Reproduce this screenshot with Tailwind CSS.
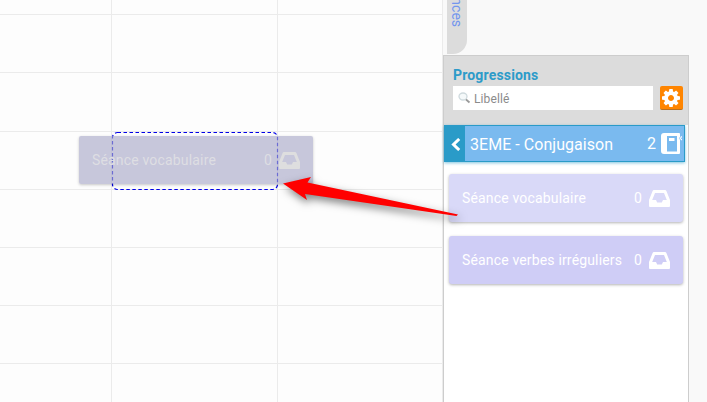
<!DOCTYPE html>
<html lang="fr">
<head>
<meta charset="utf-8">
<title>Progressions</title>
<script src="https://cdn.jsdelivr.net/npm/@tailwindcss/browser@4"></script>
</head>
<body class="relative flex h-[402px] w-[707px] overflow-hidden bg-[#f9f9f9] font-[Roboto,sans-serif]">
<svg class="hidden">
  <symbol id="inbox" viewBox="0 0 21 17"><path fill-rule="evenodd" d="M5 0H16Q17 0 17.400 1L21 10V16Q21 17 20 17H1Q0 17 0 16V10L3.600 1Q4 0 5 0ZM6 3L3.200 10H7L8.200 12.500H12.800L14 10H17.800L15 3Z"/></symbol>
</svg>

<!-- Calendar grid -->
<main class="grid w-[443px] shrink-0 grid-cols-[112px_166px_165px] grid-rows-[15px_58px_59px_58px_58px_58px_58px_40px] bg-[#fdfdfd] *:border-r *:border-b *:border-[#ebebeb]">
  <i></i><i></i><i></i><i></i><i></i><i></i><i></i><i></i><i></i><i></i><i></i><i></i>
  <i></i><i></i><i></i><i></i><i></i><i></i><i></i><i></i><i></i><i></i><i></i><i></i>
</main>

<!-- Side panel -->
<aside class="flex w-[246px] shrink-0 flex-col">
  <div class="ml-1 flex h-[54px] w-5 items-end justify-center rounded-br-[14px] bg-[#dcdcdc] pb-[27px]">
    <span class="text-[14px] leading-5 whitespace-nowrap text-[#7396ee] [writing-mode:vertical-rl]">Séances</span>
  </div>
  <section class="mt-px flex h-[348px] flex-col border-x border-t border-[#cdcdcd] bg-white">
    <header class="h-[69px] bg-[#dcdcdc] pt-[9px] pl-[9px]">
      <h2 class="mb-px h-5 text-[14px] leading-5 font-bold tracking-[0.17px] text-[#2d9bc9]">Progressions</h2>
      <div class="flex gap-[7px]">
        <div class="flex h-6 w-[200px] items-center bg-white pl-[5px]">
          <svg class="h-3 w-[13px]" viewBox="0 0 13 12" fill="none"><ellipse cx="5" cy="4.500" rx="4" ry="3.500" fill="#f5f9fa" stroke="#cfdade" stroke-width="1.300"/><path d="M8 7.500L11.500 10.500" stroke="#999" stroke-width="1.800"/></svg>
          <span class="ml-[3px] pt-px text-[12px] tracking-[0.1px] text-[#8b8b8b]">Libellé</span>
        </div>
        <div class="flex h-6 w-[23px] items-center justify-center rounded-[2px] border-b border-[#b87020] bg-[#ff8500]">
          <svg class="mr-px size-[18px] fill-white" viewBox="0 128 1536 1536"><path d="M1024 896q0-106-75-181t-181-75-181 75-75 181 75 181 181 75 181-75 75-181zm512-109v222q0 12-8 23t-20 13l-185 28q-19 54-39 91 35 50 107 138 10 12 10 25t-9 23q-27 37-99 108t-94 71q-12 0-26-9l-138-108q-44 23-91 38-16 136-29 186-7 28-36 28h-222q-14 0-24.500-8.500t-11.500-21.500l-28-184q-49-16-90-37l-141 107q-10 9-25 9-14 0-25-11-126-114-165-168-7-10-7-23 0-12 8-23 15-21 51-66.500t54-70.500q-27-50-41-99l-183-27q-13-2-21-12.500t-8-23.500v-222q0-12 8-23t19-13l186-28q14-46 39-92-40-57-107-138-10-12-10-24 0-10 9-23 26-36 98.500-107.500t94.500-71.500q13 0 26 10l138 107q44-23 91-38 16-136 29-186 7-28 36-28h222q14 0 24.500 8.500t11.500 21.500l28 184q49 16 90 37l142-107q9-9 24-9 13 0 25 10 129 119 165 170 7 8 7 22 0 12-8 23-15 21-51 66.500t-54 70.500q26 50 41 98l183 28q13 2 21 12.500t8 23.500z"/></svg>
        </div>
      </div>
    </header>
    <div class="flex h-[37px] w-[241px] shrink-0 items-center border border-l-0 border-[#2a9bc8] bg-[#7abaef] text-[16px] text-white shadow-[0_1px_3px_rgba(42,155,200,.6)]">
      <div class="flex h-full w-[21px] items-center justify-center bg-[#2a9bc8] pl-[2px]">
        <svg class="mt-px h-[13px] w-[10px]" viewBox="0 0 10 13" fill="none"><path d="M8.200 1L2.500 6.500L8.200 12" stroke="#fff" stroke-width="3"/></svg>
      </div>
      <span class="ml-[5px] w-[177px] pt-[2px] tracking-[0.04px]">3EME - Conjugaison</span>
      <span class="w-[14px]">2</span>
      <svg class="mt-px h-[22px] w-[21px]" viewBox="0 0 21 22"><path fill="#fff" fill-rule="evenodd" d="M3 0H18Q19 0 19 1V20Q19 21 18 21H3Q0 21 0 18V3Q0 0 3 0ZM6 3V18.500H16V3Z"/><path fill="#fff" d="M8 5H13.500V8H8Z"/><path d="M17 3.500L21 7M21 3.500L17 7" stroke="#fff" stroke-width="1.200"/><path d="M19.500 3.500L18.500 5.200L19.500 7" stroke="#9fcdf4" fill="none"/></svg>
    </div>
    <div class="mt-3 ml-[5px] flex h-12 w-[234px] shrink-0 items-center rounded-[3px] bg-[#d9d9f8] pl-[13px] text-[14px] text-white shadow-[0_1px_3px_rgba(0,0,0,.3)]">
      <span class="w-[172px] tracking-[0.17px]">Séance vocabulaire</span><span class="w-[15px]">0</span>
      <svg class="h-[17px] w-[21px] fill-white"><use href="#inbox"/></svg>
    </div>
    <div class="mt-[14px] ml-[5px] flex h-12 w-[234px] shrink-0 items-center rounded-[3px] bg-[#cfcdf6] pl-[13px] text-[14px] text-white shadow-[0_1px_3px_rgba(0,0,0,.3)]">
      <span class="w-[172px] tracking-[0.16px] whitespace-nowrap">Séance verbes irréguliers</span><span class="w-[15px]">0</span>
      <svg class="h-[17px] w-[21px] fill-white"><use href="#inbox"/></svg>
    </div>
  </section>
</aside>

<!-- Drop target and dragged card -->
<svg class="absolute top-[131px] left-[111px] h-[60px] w-[168px]" fill="none"><rect x="1.500" y="1.500" width="165" height="57" rx="5" stroke="#0000e6" stroke-width="1.200" stroke-dasharray="3.500 2.500"/></svg>
<div class="absolute top-[136px] left-[79px] flex h-12 w-[234px] items-center rounded-[2px] bg-[#a9a9c9]/64 pl-[13px] text-[14px] text-[#dedee3] shadow-[0_1px_3px_rgba(0,0,0,.22)]">
  <span class="w-[172px] tracking-[0.17px]">Séance vocabulaire</span><span class="w-[15px]">0</span>
  <svg class="h-[17px] w-[21px] fill-[#dededf]"><use href="#inbox"/></svg>
</div>
<svg class="absolute top-[160px] left-[270px] h-[80px] w-[210px] overflow-visible drop-shadow-[2px_4px_4px_rgba(0,0,0,.5)]"><path fill="#ff0000" d="M13 23.500L41 17L37.500 22.500L188 54.500L186.500 56L35 34L37 40Z"/></svg>
</body>
</html>
